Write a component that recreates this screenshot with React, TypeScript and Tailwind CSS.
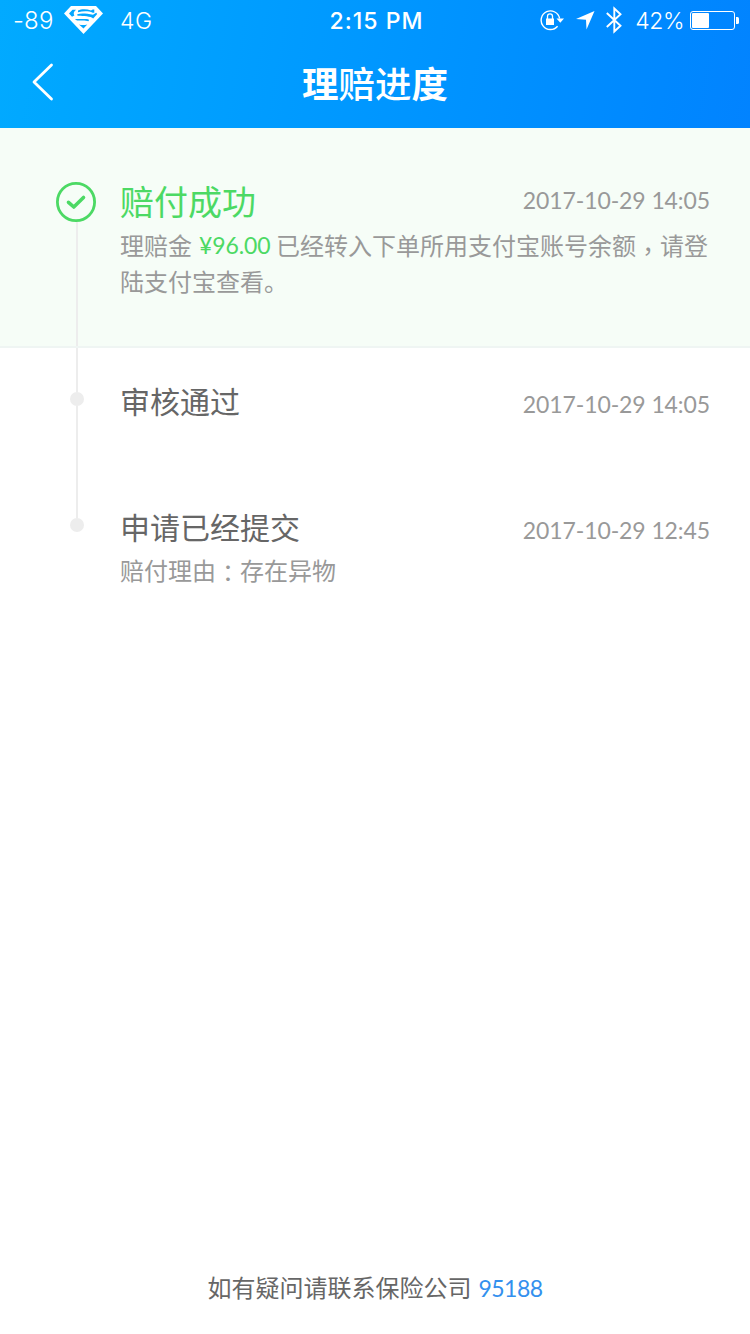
import React from 'react';

interface ProgressStep {
  id: string;
  title: string;
  time: string;
  detail?: { label: string; reason: string };
}

const steps: ProgressStep[] = [
  { id: 'approved', title: '审核通过', time: '2017-10-29 14:05' },
  {
    id: 'submitted',
    title: '申请已经提交',
    time: '2017-10-29 12:45',
    detail: { label: '赔付理由', reason: '存在异物' },
  },
];

const CarrierLogo: React.FC = () => (
  <svg className="h-7 w-[39px]" viewBox="0 0 39 28" fill="none">
    <path d="M7 0h25l7 7.500L19.500 28 0 7.500z" fill="white" />
    <path d="M5 7.500L8.500 3.800h3.700C9.800 5.300 9 7.500 10.400 9.600L8 10.800z" fill="#03a6ff" />
    <path d="M14 4.600C17.500 2.800 22.500 2.800 27 4.500l1.700-.9h1.600v3.200h-1.600C25 4.800 19 5 14 6.200z" fill="#03a6ff" />
    <path d="M13.500 8.200C17 6.900 23 7.500 29 8.800l3.200-2 1 1.200-4 4.500C27 10 19 10.300 14.500 9.800c-1.500-.3-1.800-1.100-1-1.600z" fill="#03a6ff" />
    <path d="M10.800 13h11.700c2.500.1 3.200 1.300 1.800 2.300-2.500-1.100-6-.8-11.300-.7z" fill="#03a6ff" />
    <path d="M15 18.400c2.300.8 5.200.9 8.300 0l-3.800 4.200z" fill="#03a6ff" />
  </svg>
);

const RotationLockIcon: React.FC = () => (
  <svg className="h-[22px] w-6" viewBox="0 0 24 22" fill="none">
    <path d="M17.600 17.200A9.300 9.300 0 1 1 19.600 9.500" stroke="white" strokeWidth="1.400" />
    <path d="M16.500 9.500H24l-3.700 4.200z" fill="white" />
    <path d="M6 9.500h8V16H6z" fill="white" />
    <path d="M7.500 10V7.300a2.500 2.500 0 0 1 5 0V10" stroke="white" strokeWidth="1.300" />
  </svg>
);

const LocationIcon: React.FC = () => (
  <svg className="h-[19px] w-[19px]" viewBox="0 0 19 19" fill="white">
    <path d="M18.500 0L10.500 18.500 10 8.800 0 8z" />
  </svg>
);

const BluetoothIcon: React.FC = () => (
  <svg className="h-7 w-4" viewBox="0 0 16 28" fill="none" stroke="white" strokeWidth="1.900">
    <path d="M.8 7L14.500 19.800 8.300 25.500V2.500L14.500 8.200.8 21" />
  </svg>
);

const BatteryIcon: React.FC = () => (
  <svg className="h-[19px] w-[49px]" viewBox="0 0 49 19" fill="none">
    <rect x=".5" y=".5" width="44" height="18" rx="2.500" stroke="white" />
    <rect x="2" y="2" width="17" height="15" rx="1" fill="white" />
    <path d="M46 6h1.500a1.500 1.500 0 0 1 1.500 1.500v4a1.500 1.500 0 0 1-1.500 1.500H46z" fill="white" />
  </svg>
);

const StatusBar: React.FC = () => (
  <div className="grid h-10 grid-cols-[1fr_auto_1fr] items-center pl-[13px] pr-[11px] font-['Inter',sans-serif] text-[23px] leading-10">
    <div className="flex items-center">
      <span className="w-[51px] pt-0.5 text-2xl leading-9 font-light tracking-[0.2px]">-89</span>
      <CarrierLogo />
      <span className="ml-[17px] pt-0.5 leading-9 font-light tracking-[0.6px]">4G</span>
    </div>
    <span className="pt-0.5 pl-px leading-9 font-medium tracking-[1px]">2:15 PM</span>
    <div className="flex items-center justify-end">
      <RotationLockIcon />
      <span className="ml-3"><LocationIcon /></span>
      <span className="ml-[11px]"><BluetoothIcon /></span>
      <span className="ml-[13px] mr-1.5 pt-0.5 leading-9 font-light tracking-[-0.5px]">42%</span>
      <BatteryIcon />
    </div>
  </div>
);

const StepTime: React.FC<{ value: string }> = ({ value }) => (
  <time className="whitespace-nowrap font-['Lato',sans-serif] text-[23px] leading-8 tracking-[-0.1px] text-[#999]">
    {value}
  </time>
);

export default function App() {
  return (
    <div className="flex h-[1334px] w-[750px] flex-col bg-white font-['Noto_Sans_CJK_SC',sans-serif]">
      <header className="h-32 bg-linear-100 from-[#02aaff] to-[#0283ff] text-white">
        <StatusBar />
        <div className="grid h-[84px] grid-cols-[100px_1fr_100px] items-center">
          <svg className="ml-8 h-[38px] w-[22px]" viewBox="0 0 22 38" fill="none" stroke="white" strokeWidth="2.800" strokeLinecap="round" strokeLinejoin="round">
            <path d="M19.500 2L2 19l17.500 17" />
          </svg>
          <h1 className="pt-0.5 text-center text-[36.500px] font-bold leading-[80px]">
            理<span className="font-medium">赔进</span>度
          </h1>
        </div>
      </header>

      <section className="flex h-[220px] border-b-2 border-[#eff5f3] bg-[#f6fdf7]">
        <div className="flex w-[120px] shrink-0 flex-col pl-14 pt-[54px]">
          <svg className="h-10 w-10 shrink-0" viewBox="0 0 40 40" fill="none" stroke="#4cd964" strokeLinecap="round" strokeLinejoin="round">
            <circle cx="20" cy="20" r="18.600" strokeWidth="2.800" />
            <path d="M12.500 20.300l5.300 4.700L27.500 15.500" strokeWidth="3.600" />
          </svg>
          <div className="ml-5 w-0.5 flex-1 bg-[#ededed]" />
        </div>
        <div className="w-[590px] pt-12">
          <div className="flex h-[51px] items-start justify-between">
            <h2 className="text-[34px] leading-[50px] text-[#4cd964]">赔付成功</h2>
            <div className="pt-2"><StepTime value="2017-10-29 14:05" /></div>
          </div>
          <div className="text-2xl leading-9 text-[#999]">
            <p className="flex h-9 whitespace-nowrap">
              <span>理赔金</span>
              <span className="w-[84px] pl-[7px] font-['Lato',sans-serif] text-[23px] tracking-[-0.1px] text-[#4cd964]">¥96.00</span>
              <span>已经转入下单所用支付宝账号余额</span>
              <span className="font-['Noto_Sans_CJK_TC',sans-serif] leading-[46px]">，</span>
              <span>请登</span>
            </p>
            <p>陆支付宝查看。</p>
          </div>
        </div>
      </section>

      <ol className="flex-1">
        {steps.map((step, index) => (
          <li key={step.id} className={index === 0 ? 'flex h-[126px]' : 'flex'}>
            <div className="flex w-[120px] shrink-0 flex-col pl-[70px]">
              <div className="ml-1.5 h-11 w-0.5 bg-[#ededed]" />
              <div className="h-3.5 w-3.5 shrink-0 rounded-full bg-[#ededed]" />
              {index < steps.length - 1 && <div className="ml-1.5 w-0.5 flex-1 bg-[#ededed]" />}
            </div>
            <div className="w-[590px] pt-[29px]">
              <div className="flex h-[49px] items-start justify-between">
                <h2 className="text-[30px] leading-[46px] text-[#666]">{step.title}</h2>
                <div className="pt-[11px]"><StepTime value={step.time} /></div>
              </div>
              {step.detail && (
                <p className="flex h-9 text-2xl leading-9 text-[#999]">
                  <span>{step.detail.label}</span>
                  <span className="font-['Noto_Sans_CJK_TC',sans-serif] leading-10">：</span>
                  <span>{step.detail.reason}</span>
                </p>
              )}
            </div>
          </li>
        ))}
      </ol>

      <footer className="flex h-[67px] justify-center text-2xl leading-10 text-[#666]">
        <span>如有疑问请联系保险公司</span>
        <a className="ml-[7px] pt-px font-['Lato',sans-serif] text-[23px] tracking-[-0.5px] text-[#3390ee]">95188</a>
      </footer>
    </div>
  );
}
